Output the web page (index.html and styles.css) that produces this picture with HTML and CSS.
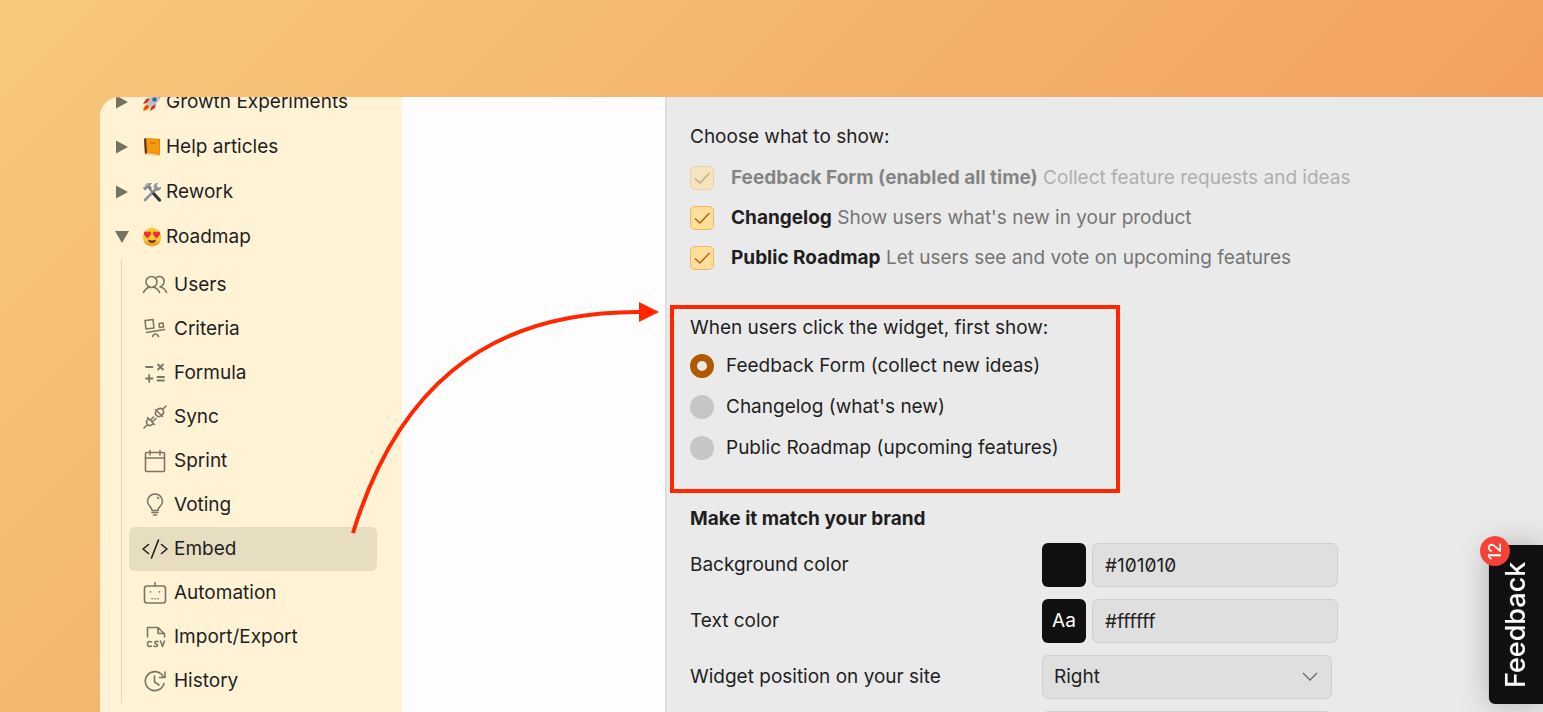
FILE: index.html
```html
<!DOCTYPE html>
<html lang="en">
<head>
    <meta charset="UTF-8">
    <meta name="viewport" content="width=device-width, initial-scale=1.0">
    <title>Roadmap - Embed</title>
    <link rel="stylesheet" href="styles.css">
</head>
<body>
    <div class="window">
        <nav class="sidebar">
            <ul class="tree">
                <li>
                    <a href="#" class="tree-item">
                        <svg class="caret" viewBox="0 0 14 14"><path d="M1 0.500L13 7L1 13.500Z"/></svg>
                        <svg class="emoji" viewBox="0 0 20 20">
                            <path d="M5 11L1 12L4 7L9 6ZM9 15L8 19L13 16L14 11Z" fill="#d9302c"/>
                            <path d="M5 12C7 6 12 1 19 1C19 8 14 13 8 15Z" fill="#b9c3cc"/>
                            <path d="M14 2C16 1 18 1 19 1C19 3 19 4 18 6Z" fill="#d9302c"/>
                            <circle cx="12.500" cy="7.500" r="2.200" fill="#2f6fa8"/>
                            <path d="M5 12L8 15C6 18 4 19 1 19C1 16 2 14 5 12Z" fill="#f9a11b"/>
                            <path d="M5 13L7 15C5 17 3 18 2 18C2 16 3 14 5 13Z" fill="#e8431f"/>
                        </svg>
                        Growth Experiments
                    </a>
                </li>
                <li>
                    <a href="#" class="tree-item">
                        <svg class="caret" viewBox="0 0 14 14"><path d="M1 0.500L13 7L1 13.500Z"/></svg>
                        <svg class="emoji" viewBox="0 0 20 20">
                            <path d="M2 2L4 1L18 2V18L16 19L3 17Z" fill="#e8860c"/>
                            <path d="M2 2L4 1L5 17L3 17.500Z" fill="#5a3a1c"/>
                            <path d="M3 17L16 19L18 18L5 16Z" fill="#f7e3b5"/>
                            <path d="M5 2L17 3V17L5.500 15.500Z" fill="#f59a10"/>
                            <path d="M8 5L14 5.500V7L8 6.500Z" fill="#d97706"/>
                        </svg>
                        Help articles
                    </a>
                </li>
                <li>
                    <a href="#" class="tree-item">
                        <svg class="caret" viewBox="0 0 14 14"><path d="M1 0.500L13 7L1 13.500Z"/></svg>
                        <svg class="emoji" viewBox="0 0 20 20">
                            <path d="M3 18L15 6" stroke="#8b939c" stroke-width="2.600" stroke-linecap="round"/>
                            <path d="M12 6C11 3 13 1 16 1L14.500 4L16 6L19 4.500C19.500 7 17 9.500 14 8.500Z" fill="#8b939c"/>
                            <path d="M8 7L12 12" stroke="#7d858e" stroke-width="2.200"/>
                            <path d="M12 12L17.500 18" stroke="#33363b" stroke-width="3.200" stroke-linecap="round"/>
                            <path d="M1 6L5 1.500L10 1L8 3.500L10 6L7.500 8L5.500 6L3 8.500Z" fill="#7b838d"/>
                            <path d="M2 6L5 3L7 3" stroke="#c3c9cf" fill="none"/>
                        </svg>
                        Rework
                    </a>
                </li>
                <li>
                    <a href="#" class="tree-item">
                        <svg class="caret" viewBox="0 0 14 14"><path d="M0 1H14L7 13Z"/></svg>
                        <svg class="emoji" viewBox="0 0 20 20">
                            <circle cx="10" cy="10" r="9.200" fill="#fcc52f"/>
                            <path d="M1.500 13.500A9.200 9.200 0 0 0 18.500 13.500C14 17 6 17 1.500 13.500Z" fill="#f2a01e"/>
                            <path d="M5.500 11.500L2 7.500C1 5 4 3.500 5.500 5.500C7 3.500 9.700 4.500 9 7.200Z" fill="#ee2b36"/>
                            <path d="M14.500 11.500L18 7.500C19 5 16 3.500 14.500 5.500C13 3.500 10.300 4.500 11 7.200Z" fill="#ee2b36"/>
                            <path d="M6 12.800Q10 14 14 12.800Q13.500 16 10 16Q6.500 16 6 12.800Z" fill="#6f2a12"/>
                        </svg>
                        Roadmap
                    </a>
                    <ul class="submenu">
                        <li><a href="#" class="submenu-item">
                            <svg class="icon" viewBox="0 0 26 26"><circle cx="9.500" cy="10" r="5.500"/><path d="M1.500 20.500C2.500 18 4.500 16.200 7.500 14.700M11.500 14.700C14.500 16 16.500 18 17.500 20.500M14.500 5.200C19 3 22.500 6.500 22 10C21.800 12 20.500 14 18 14.700C21.500 15.500 23.500 18 24.500 20.500"/></svg>
                            Users
                        </a></li>
                        <li><a href="#" class="submenu-item">
                            <svg class="icon" viewBox="0 0 26 26"><path d="M3 4.500L11 3.500L12 12L4 13ZM17 7.500L21 7L21.500 11L17.500 11.500ZM4.500 16.500L22.500 13.500M10.500 20.500L11.500 19Q13.500 17 15.500 19L16.500 20.500"/></svg>
                            Criteria
                        </a></li>
                        <li><a href="#" class="submenu-item">
                            <svg class="icon icon-bold" viewBox="0 0 26 26"><path d="M4 7H10.500M16 4.500L21 9.500M21 4.500L16 9.500M4 18.500H10.500M7.200 15V22M15.500 17H22M15.500 20.500H22"/></svg>
                            Formula
                        </a></li>
                        <li><a href="#" class="submenu-item">
                            <svg class="icon" viewBox="0 0 26 26"><path d="M2 24L5.500 20.500M20.500 5.500L24 2M5.500 13.500L12.500 20.500M6.500 14.500C3.500 17.500 4 19 5.500 20.500C7 22 9 22 11.500 19.500M9 15.500L11.500 13M10.500 17.500L14 14.500M13.500 5.500L20.500 12.500M14.500 6.500C17 4 19 4 20.500 5.500C22 7 22.500 9 19.500 11.500M14.500 6.500C12.500 9 13.500 10.500 14.500 11.500C15.500 12.500 17 13.500 19.500 11.500"/></svg>
                            Sync
                        </a></li>
                        <li><a href="#" class="submenu-item">
                            <svg class="icon" viewBox="0 0 26 26"><rect x="3.500" y="4.500" width="19" height="19" rx="1"/><path d="M3.500 10H22.500M8 2.500V7M18 2.500V7"/></svg>
                            Sprint
                        </a></li>
                        <li><a href="#" class="submenu-item">
                            <svg class="icon" viewBox="0 0 26 26"><path d="M10 18.500C10 14.500 5.500 14 5.500 9.500C5.500 5 9 2 13 2C17 2 20.500 5 20.500 9.500C20.500 14 16 14.500 16 18.500ZM10 20.500H16M11.500 23H14.500M15.500 5.500L16.500 6.500"/></svg>
                            Voting
                        </a></li>
                        <li><a href="#" class="submenu-item active">
                            <svg class="icon" viewBox="0 0 26 26"><path d="M6.500 8.500L1 13L6.500 17.500M19.500 8.500L25 13L19.500 17.500M16.500 4L9.500 22"/></svg>
                            Embed
                        </a></li>
                        <li><a href="#" class="submenu-item">
                            <svg class="icon" viewBox="0 0 26 26"><rect x="2.500" y="6" width="21" height="17" rx="2.500"/><path d="M13 6V2.500M8.500 11.800V12M17.500 11.800V12M10 18.800H10.200M13 18.800H13.200M16 18.800H16.200"/></svg>
                            Automation
                        </a></li>
                        <li><a href="#" class="submenu-item">
                            <svg class="icon" viewBox="0 0 26 26"><path d="M5.500 13V3.500H16L22.500 10V13M16 3.500V9.500H22.500M9.500 18Q5.500 16.500 5.500 20Q5.500 23.500 9.500 22M16 17.500C13 16.500 11.500 19 14 19.700C17 20.500 15.500 23.500 12 22M18.500 17L20.500 22.500L22.500 17"/></svg>
                            Import/Export
                        </a></li>
                        <li><a href="#" class="submenu-item">
                            <svg class="icon" viewBox="0 0 26 26"><path d="M20.500 7.500A9.500 9.500 0 1 0 22 15.500M23 4V9.500H17.500M21.500 9L20 7M12.500 8V14L17 17"/></svg>
                            History
                        </a></li>
                    </ul>
                </li>
            </ul>
        </nav>

        <div class="content"></div>

        <main class="panel">
            <div class="group-title">Choose what to show:</div>
            <label class="check-row disabled">
                <input type="checkbox" checked disabled>
                <span><b>Feedback Form (enabled all time)</b> <span class="hint">Collect feature requests and ideas</span></span>
            </label>
            <label class="check-row">
                <input type="checkbox" checked>
                <span><b>Changelog</b> <span class="hint">Show users what's new in your product</span></span>
            </label>
            <label class="check-row">
                <input type="checkbox" checked>
                <span><b>Public Roadmap</b> <span class="hint">Let users see and vote on upcoming features</span></span>
            </label>

            <div class="highlight">
                <div class="group-title">When users click the widget, first show:</div>
                <label class="radio-row"><input type="radio" name="first" checked>Feedback Form (collect new ideas)</label>
                <label class="radio-row"><input type="radio" name="first">Changelog (what's new)</label>
                <label class="radio-row"><input type="radio" name="first">Public Roadmap (upcoming features)</label>
            </div>

            <h2>Make it match your brand</h2>
            <div class="field">
                <label for="bg-color">Background color</label>
                <button class="swatch" aria-label="Pick background color"></button>
                <input type="text" id="bg-color" value="#101010">
            </div>
            <div class="field">
                <label for="text-color">Text color</label>
                <button class="swatch">Aa</button>
                <input type="text" id="text-color" value="#ffffff">
            </div>
            <div class="field">
                <label for="position">Widget position on your site</label>
                <div class="select">
                    <select id="position">
                        <option>Right</option>
                    </select>
                    <svg class="chevron" viewBox="0 0 16 10"><path d="M1 1L8 8L15 1"/></svg>
                </div>
            </div>
            <div class="field">
                <label for="more"></label>
                <div class="select">
                    <select id="more"></select>
                </div>
            </div>
        </main>

        <!-- arrow from the Embed item to the widget options -->
        <svg class="arrow" viewBox="0 0 320 240">
            <path class="arrow-line" d="M13 236C55 99 140 14 300 15"/>
            <path class="arrow-head" d="M299 5L319 15L299 25Z"/>
        </svg>
    </div>

    <button class="feedback">
        Feedback
        <span class="badge">12</span>
    </button>
</body>
</html>
```
FILE: styles.css
```css
* {
    box-sizing: border-box;
}

body {
    margin: 0;
    height: 100vh;
    overflow: hidden;
    display: flex;
    font-family: 'Inter', sans-serif;
    font-size: 19px;
    line-height: 24px;
    color: #1f1f1f;
    background-image: linear-gradient(135deg, #f7c97c 0%, #f2a05e 74%, #ee8a4c 100%);
}

ul {
    list-style: none;
    margin: 0;
    padding: 0;
}

button,
input,
select {
    font: inherit;
    color: inherit;
    margin: 0;
}

.window {
    position: relative;
    flex: 1;
    display: flex;
    margin: 97px 0 0 100px;
    border-radius: 20px 0 0 0;
    overflow: hidden;
    background-color: #fdfdfd;
}

/* sidebar */
.sidebar {
    width: 302px;
    flex-shrink: 0;
    padding: 0 25px 0 15px;
    background-color: #fff2d5;
}

/* the list is scrolled a little */
.tree {
    margin-top: -18px;
}

.tree-item {
    display: flex;
    align-items: center;
    height: 45px;
    color: inherit;
    text-decoration: none;
}

.caret {
    width: 14px;
    height: 14px;
    margin-right: 13px;
    fill: #75715f;
}

.emoji {
    width: 20px;
    height: 20px;
    margin-right: 4px;
    fill: none;
}

.submenu {
    margin-left: 6px;
    padding: 4px 0 0 7px;
    border-left: 1px solid #e3d8bd;
}

.submenu-item {
    display: flex;
    align-items: center;
    height: 44px;
    padding-left: 13px;
    border-radius: 6px;
    color: inherit;
    text-decoration: none;
}

.submenu-item.active {
    background-color: #e7dec2;
}

.icon {
    width: 26px;
    height: 26px;
    margin-right: 6px;
    fill: none;
    stroke: #7b7767;
    stroke-width: 1.6;
    stroke-linecap: round;
    stroke-linejoin: round;
}

.icon-bold {
    stroke-width: 1.8;
}

.active .icon {
    stroke: #1f1f1f;
}

.content {
    flex: 0 0 263px;
}

/* settings */
.panel {
    flex: 1;
    padding: 28px 24px 0 23px;
    border-left: 2px solid #dedede;
    background-color: #eaeaea;
}

.check-row {
    display: flex;
    align-items: center;
    height: 40px;
}

.group-title + .check-row {
    margin-top: 9px;
}

.check-row.disabled {
    opacity: 0.5;
}

.check-row input {
    appearance: none;
    width: 24px;
    height: 24px;
    margin-right: 17px;
    border: 1px solid #f3b75b;
    border-radius: 5px;
    background: #ffdf9c url("data:image/svg+xml,%3Csvg xmlns='http://www.w3.org/2000/svg' viewBox='0 0 22 22'%3E%3Cpath d='M4 11.500L9 16L18.500 6' fill='none' stroke='%23b45f06' stroke-width='1.300'/%3E%3C/svg%3E");
}

.hint {
    color: #757575;
}

.highlight {
    width: 450px;
    margin: 27px 0 0 -20px;
    padding: 7px 16px 21px;
    border: 4px solid #ff2600;
}

.radio-row {
    display: flex;
    align-items: center;
    height: 41px;
}

.group-title + .radio-row {
    margin-top: 5px;
}

.radio-row input {
    appearance: none;
    width: 24px;
    height: 24px;
    margin-right: 12px;
    border-radius: 50%;
    background-color: #c6c6c6;
}

.radio-row input:checked {
    border: 7px solid #b05a00;
    background-color: #eaeaea;
}

h2 {
    margin: 14px 0 12px;
    font-size: 19px;
    line-height: 24px;
}

.field {
    display: flex;
    align-items: center;
    height: 44px;
    margin-bottom: 12px;
}

.field label {
    width: 352px;
    flex-shrink: 0;
}

.swatch {
    width: 44px;
    height: 44px;
    margin-right: 6px;
    padding: 0;
    border: none;
    border-radius: 6px;
    background-color: #101010;
    color: #ffffff;
}

.field input,
.field select {
    height: 44px;
    border: 1px solid #d0d0d0;
    border-radius: 6px;
    background-color: #dfdfdf;
}

.field input {
    width: 246px;
    padding: 0 12px;
    font-feature-settings: 'zero';
}

.select {
    position: relative;
    width: 290px;
}

.field select {
    display: block;
    appearance: none;
    width: 100%;
    padding: 0 11px;
}

.chevron {
    position: absolute;
    right: 14px;
    top: 17px;
    width: 16px;
    height: 10px;
    fill: none;
    stroke: #6b6b6b;
    stroke-width: 1.3;
    pointer-events: none;
}

.arrow {
    position: absolute;
    left: 240px;
    top: 200px;
    width: 320px;
    height: 240px;
    pointer-events: none;
}

.arrow-line {
    fill: none;
    stroke: #ff2600;
    stroke-width: 4;
}

.arrow-head {
    fill: #ff2600;
}

/* widget button, text runs bottom to top */
.feedback {
    position: fixed;
    right: 0;
    bottom: 8px;
    width: 54px;
    height: 159px;
    padding: 0;
    border: none;
    border-radius: 0 6px 6px 0;
    background-color: #101010;
    box-shadow: 0 0 30px rgba(0, 0, 0, 0.25);
    color: #ffffff;
    font-size: 27px;
    font-weight: 500;
    line-height: 54px;
    writing-mode: vertical-rl;
    transform: rotate(180deg);
}

.badge {
    position: absolute;
    right: -9px;
    bottom: -9px;
    width: 30px;
    height: 30px;
    border-radius: 50%;
    background-color: #f44336;
    font-size: 17px;
    line-height: 30px;
    text-align: center;
}
```
